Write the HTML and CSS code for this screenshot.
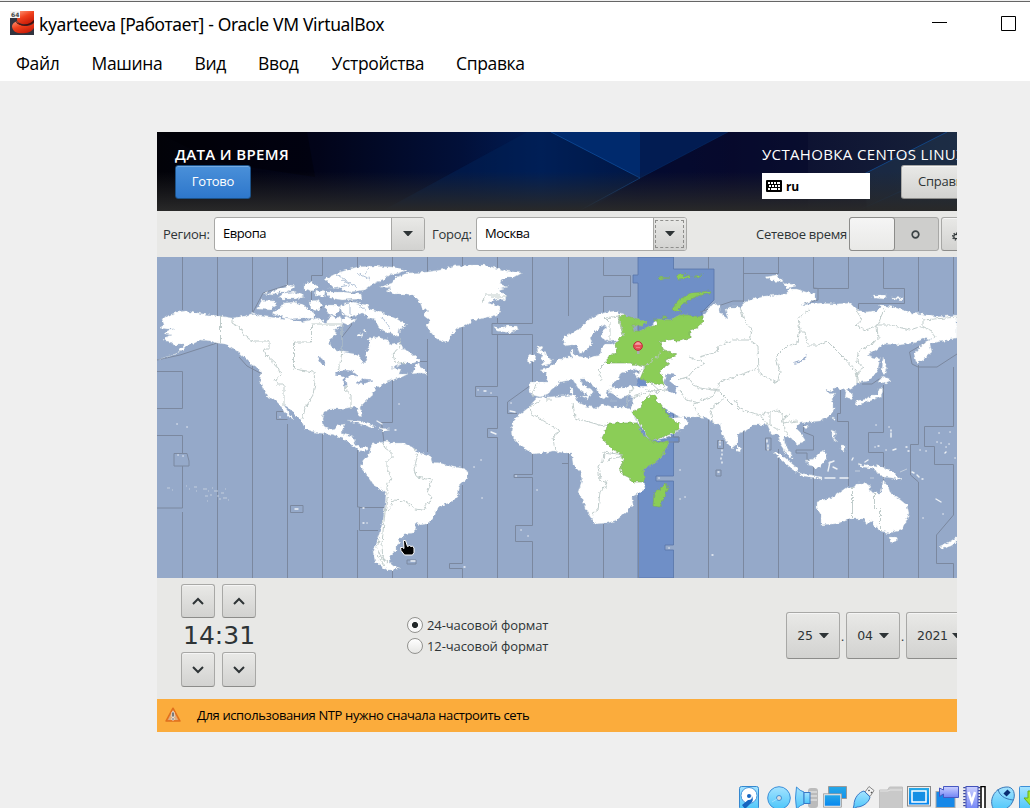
FILE: index.html
```html
<!DOCTYPE html>
<html lang="ru">
<head>
<meta charset="utf-8">
<title>kyarteeva [Работает] - Oracle VM VirtualBox</title>
<link rel="stylesheet" href="styles.css">
</head>
<body>
<div class="window">
  <div class="titlebar">
    <svg class="app-icon" viewBox="0 0 24 24">
      <defs><linearGradient id="red" x1="0" y1="0" x2="0.6" y2="1"><stop offset="0" stop-color="#ff9a7a"/><stop offset=".5" stop-color="#f0401c"/><stop offset="1" stop-color="#c91c08"/></linearGradient></defs>
      <rect width="24" height="24" fill="#32343f"/>
      <path d="M8 0h16v9c-3 4-7 5-12 4-3-1-5-2-5-4z" fill="url(#red)"/>
      <path d="M2 15c1-4 4-4 5-5 1 5 12 7 17 2v5c-3 5-10 6-16 5-4-1-6-4-6-7z" fill="url(#red)"/>
      <path d="M6 10c3 5 13 5 18-1v2c-5 5-15 5-18 0z" fill="#4e0c06"/>
      <rect width="10" height="7" fill="#f5f5f5"/>
      <text x="1" y="6" class="badge">64</text>
    </svg>
    <span class="title">kyarteeva [Работает] - Oracle VM VirtualBox</span>
    <svg class="win-buttons" viewBox="0 0 98 24"><path d="M0 10.500h15M69.500 4.500h14v14h-14z" fill="none" stroke="#000"/></svg>
  </div>
  <div class="menubar">
    <span class="m1">Файл</span><span class="m2">Машина</span><span class="m3">Вид</span><span class="m4">Ввод</span><span class="m5">Устройства</span><span class="m6">Справка</span>
  </div>
  <div class="workspace">
    <div class="screen">
      <div class="header">
        <svg class="header-art" viewBox="0 0 800 79" preserveAspectRatio="none">
          <defs>
            <linearGradient id="night"><stop offset="0" stop-color="#020208"/><stop offset=".2" stop-color="#020419"/><stop offset=".38" stop-color="#021039"/><stop offset=".48" stop-color="#001c55"/><stop offset=".6" stop-color="#020d35"/><stop offset=".72" stop-color="#090b2e"/><stop offset="1" stop-color="#17223a"/></linearGradient>
            <linearGradient id="fade" x2="0" y2="1"><stop offset=".5" stop-color="#272727" stop-opacity="0"/><stop offset="1" stop-color="#292929"/></linearGradient>
          </defs>
          <rect width="800" height="79" fill="url(#night)"/>
          <path d="M0 0h150l8 45L60 30z" fill="#000006" opacity=".4"/>
          <path d="M225 79L370 0h30l82 46-60 33z" fill="#002158" opacity=".5"/>
          <path d="M394 0h89v46z" fill="#002a6d"/>
          <path d="M483 0h88l-88 46z" fill="#021c52"/>
          <path d="M571 0h80v79H430l53-33z" fill="#05092c" opacity=".55"/>
          <path d="M707 42L790 0h10v79h-90z" fill="#213850" opacity=".5"/>
          <path d="M394 0l89 46-61 33M707 42L790 0" fill="none" stroke="#1156a8" opacity=".65"/>
          <path d="M700 79l100-45M571 0l-88 46" fill="none" stroke="#1156a8" opacity=".25"/>
          <rect width="800" height="79" fill="url(#fade)"/>
        </svg>
        <div class="head-left"><div class="head-title">ДАТА И ВРЕМЯ</div><div class="btn-blue">Готово</div></div>
        <div class="head-right">
          <div class="head-sub">УСТАНОВКА CENTOS LINUX 7</div>
          <div class="head-row">
            <div class="layout"><svg width="16" height="12" viewBox="0 0 16 12"><rect width="16" height="12" rx="1"/><path d="M2 3h2M5 3h2M8 3h2M11 3h3M3 6h2M6 6h2M9 6h2M12 6h2M2 9h2M5 9h6M12 9h2" stroke="#fff" stroke-width="2"/></svg><b>ru</b></div>
            <div class="btn help">Справка!</div>
          </div>
        </div>
      </div>
      <div class="toolbar">
        <span class="lbl-region">Регион:</span>
        <div class="combo"><span class="c1">Европа</span><i><svg width="10" height="6"><path d="M0 0h10L5.500 5h-1z" fill="#2e3436"/></svg></i></div>
        <span class="lbl-city">Город:</span>
        <div class="combo focused"><span class="c2">Москва</span><i><svg width="10" height="6"><path d="M0 0h10L5.500 5h-1z" fill="#2e3436"/></svg></i></div>
        <span class="lbl-net">Сетевое время</span>
        <div class="switch"><div class="knob"></div><svg width="9" height="9"><circle cx="4.500" cy="4.500" r="3.300" fill="none" stroke="#3c4446" stroke-width="1.700"/></svg></div>
        <div class="btn gear"><svg width="16" height="20" viewBox="0 0 16 20"><g fill="none" stroke="#2e3436"><circle cx="5" cy="12.500" r="2.200" stroke-width="1.200"/><circle cx="5" cy="12.500" r="3.400" stroke-width="1.300" stroke-dasharray="1.300 1.300"/><circle cx="9" cy="6" r="2" stroke-width="2"/></g></svg></div>
      </div>
      <svg class="map" viewBox="157 257 800 321">
        <defs><filter id="coast" x="157" y="257" width="800" height="321" filterUnits="userSpaceOnUse" color-interpolation-filters="sRGB"><feTurbulence type="fractalNoise" baseFrequency=".28" numOctaves="2" seed="4"/><feDisplacementMap in="SourceGraphic" scale="4.500" xChannelSelector="R" yChannelSelector="G"/></filter></defs>
        <rect x="157" y="257" width="800" height="321" fill="#95a9c9"/>
        <path d="M638 257H673.500V269H714V300L702 312V330H673.500V437H679V442H673.500V476H656V481H673.500V545H665V550H673.500V578H638V283H633V275H638z" fill="#6f8fc7" stroke="#5875a8" stroke-width=".8"/>
        <g class="zones">
          <path d="M182.500 257V310M157 371.500H182.500V408.500H157M157 435.500H182.500V453M174 453.500H187L189 461V466H174zM182.500 466V508H157M182.500 512V578M217.500 257V316M217.500 343V578M252.500 257V313L263 293L287.500 285V257M252.500 366V578M287.500 419.500H276.500V411.500H284M287.500 424V578M322.500 257V275.500H311.500V303L322 308M322.500 434V578M351.500 269V325L342 337M357.500 257V268M357.500 450V507H359.500V530.500H378M359.500 530V507.500H384M357.500 530V578M392.500 257V270M392.500 379V422.500H381.500L384 442M392.500 568V578M427.500 257V272M427.500 339V361.500H420M427.500 339V452M427.500 523V578M462.500 257V266M462.500 327V470M462.500 485V563.500H449.500V568.500H462.500V578M497.500 257V268M497.500 318V323M532.500 257V323.500H492V334.500H532.500V384L507.500 402V413.500H517M497.500 334V386.500H475.500V396.500H497.500V428.500H487.500V437.500H497.500V578M532.500 454V474.500H514V477.500H532.500V525.500H515.500V541.500H532.500V578M568.500 257V316M568.500 452V463.500H562M568.500 463V578M603.500 257V275.500H630.500V296.500H603.500V312M603.500 524V578M638.500 325V378M638.500 500V578M708.500 257V269M708.500 420V578M743.500 257V302M743.500 431V578M778.500 257V273.500H743.500M778.500 449V578M813.500 257V288L818 288.500V300L797 305M813.500 288.500H848.500V257M803.500 425V432L813.500 436V450H796V453H807V460H813.500V578M840.500 389V413.500H837.500V421.500H848.500V486M848.500 519V578M883.500 257V288.500H904.500V303.500H858.500V309M918.500 257V311M918.500 365V444.500H910.500V475L918.500 482V578M953.500 257V314M953.500 367V426.500H924.500V446.500H934.500V464.500H953.500V515L936.500 535V563.500H953.500V578M883.500 385V432.500H868.500V452.500H883.500V486M883.500 533V578M934 338L909.500 352L912 364L918 367H937L957 354M862 384H872L882 377M717.500 440.500H723.500V448.500H717.500zM765.500 438H771V450H765.500zM716 470H721V476H716zM290.500 505.500H303V512.500H290.500zM407 560H416V564H407zM648 437H679V442H660"/>
          <path d="M157 360L180 355L217 343M239 357L247 366L262 374M700 312L733 301H743"/>
        </g>
        <g filter="url(#coast)">
        <g class="land">
          <path d="M159 328L164 325L162 319L167 316L177 312L185 311L204 314L220 316L232 318L244 316L254 313L259 316L270 317L290 319L300 322L310 320L318 318L326 323L330 315L336 319L340 316L343 324L334 330L337 334L329 340L331 346L334 349L344 352L355 354L360 357L363 364L367 360L365 354L370 347L368 339L377 337L388 340L391 345L395 344L400 342L403 349L410 352L414 356L420 360L414 363L404 363L392 368L401 369L399 374L408 374L402 377L395 379L387 382L381 386L377 387L372 392L373 395L367 400L362 405L360 407L363 415L361 417L358 412L356 407L347 408L340 409L330 409L324 412L322 419L324 426L330 430L335 429L338 425L345 424L343 430L341 433L353 437L356 445L360 448L368 447V450L360 451L350 444L343 438L330 434L318 433L305 429L302 422L294 414L289 408L284 405L289 413L294 420L290 418L285 412L280 405L275 400L268 397L264 390L260 380L261 372L258 368L252 365L246 359L238 352L231 347L224 344L217 343L210 341L200 340L195 343L187 345L180 352L170 356L159 359L177 354L184 345H174L170 342L164 340L166 337L172 335L164 334L167 331L174 329L166 329z"/>
          <path d="M257 309L262 300L274 301L277 305L270 310zM272 313L280 308L284 303L294 302L304 305L309 310L314 313V319L302 318L290 319L276 315zM262 294L272 292L277 289L290 285L295 286L288 292L280 292L274 295zM279 297L284 293L294 292L304 296L296 299L284 299zM304 284L311 282L319 287L312 291L304 289zM316 290L325 292L324 297L315 296zM310 301L318 300L322 305L317 311L311 309zM325 279L337 273L350 269L357 267L373 266L392 267L407 270L400 273L390 275L386 278L373 284L365 290L350 292L342 289L334 288L330 284zM326 292L344 292L361 294L362 299L342 300L330 298zM340 307L345 303L353 302L367 305L370 309L380 312L390 316L397 319L407 325L400 329L398 337L391 333L383 332L378 327L377 321L368 318L363 313L350 317L342 314zM325 305H337L341 309L334 316L327 313zM345 316L356 320L348 325L341 322zM357 335L363 333L360 337zM363 330L366 329V333zM412 374L416 366L419 362L420 367L425 370L427 374L420 373z"/>
          <path d="M380 287L392 283L396 277L408 273L427 272L440 270L454 266L467 265L484 265L500 269L507 271L522 273L515 277L507 277L501 281L500 284L508 287L498 290L507 296L505 300L497 299L488 303L500 306L500 310L497 315L485 318L473 320L465 326L457 328L452 334L450 339L447 342L437 339L432 334L428 329L427 325L430 320L423 314L428 311L422 308L420 302L415 296L407 294L393 294L386 290L391 288z"/>
          <path d="M370 450L372 444L383 442L386 441L393 443H403L412 447L420 453L430 455L432 462L440 463L453 467L462 468L468 472L468 478L460 485L458 495L453 502L445 504L437 508L435 515L431 520L427 524L420 525L415 523L417 529L413 533L404 534V538H398L401 542L396 546L396 551L393 553L391 557L389 561L392 565L400 568L394 570L387 570L381 566L375 561L373 553L376 544L378 537L383 520L385 505L386 493L382 490L373 485L370 480L365 473L361 468L363 460L368 457z"/>
          <path d="M563 337L573 332L580 329L587 321L593 317L600 314L607 312L615 311L623 314L629 317L638 319L647 322L643 326L632 325L634 331L640 331L648 327L653 325L656 319L670 320L680 315L687 315L693 317L703 317L708 310L711 305L719 304L721 314L728 319L725 309L731 307L740 307L745 302L753 299L765 296L787 294L790 289L797 289L806 292L815 294V300L800 305L820 303L836 304L850 303L857 310L866 312L872 311L877 311L880 306L887 306L900 309L912 313L923 314L935 317L957 315V338L951 339L947 341L937 342L930 344L932 352L925 358L917 364L914 354L922 345L933 338L929 340L923 338L913 343L900 345L883 344L876 350L867 355L873 357L880 359L878 369L873 377L868 381L857 383L853 387L847 390L853 395L852 399L845 397L846 392L843 390L835 387L833 391L827 390L830 395L836 393L832 399L834 404V409L832 413L828 417L820 421L810 422L802 423L797 425V429L803 435L805 441L797 445L795 441L788 437L784 437L785 444L792 456L786 453L780 444L778 434L772 435L767 424L760 425L753 425L748 430L738 434L737 444L732 448L728 444L725 439L721 430L720 424L713 424L708 418L700 417L690 417H680L673 413L668 411L663 408L666 414L672 418L682 417L689 422L684 428L675 433L665 438L652 441L647 437L638 423L630 410L632 405L633 397L627 395L620 398L615 395L609 392L611 387L621 388L631 386L643 386L645 381L638 377L634 374L640 372L635 369L627 371L620 374L618 380L611 385V390L606 392L609 397L603 399L599 394L597 388L590 384L585 379H580L583 385L590 389L594 394H591L588 398L585 393L578 388L573 380L566 381L560 382L556 386L551 390L548 395L540 397L532 395L529 391L530 382L547 382L548 377L545 373L540 370L546 369L553 365L558 360L565 357L572 357L570 352L574 349V355L587 358L600 355L602 347L605 344H612L620 340L608 342L602 338V332L608 327L602 325L596 331L590 337L592 343L588 349L580 354L576 345L571 345L565 346z"/>
          <path d="M528 408L533 402L537 398L547 397L560 396L575 395L578 402L586 406L597 408L603 404L613 407L627 407L632 412L643 435L653 442H669L663 455L654 463L643 470L645 488L639 493L632 497L633 505L627 511L617 520L608 523L595 524L591 517L585 508L583 500L578 492L582 480L580 472L573 465L572 457L572 453L565 453L553 451L543 453L533 454L522 447L512 437L511 430L513 422L519 415z"/>
          <path d="M537 347L543 346L541 350L546 353L548 357L553 360L551 364L540 366L544 362L541 359L543 355L538 353zM527 358L531 354L536 355L535 361L528 363zM493 326L500 328L507 326L517 326L518 329L510 333L498 331zM579 396H588L587 399zM570 388H573V394H570zM610 401H617M628 401L634 399"/>
          <path d="M855 401L867 399L872 395L877 395L880 387L883 390L881 397L870 401L857 405zM878 382L883 376L892 380L883 384zM883 357L887 367L884 375L882 370zM737 446L741 449L740 452L737 451zM817 502L825 499L833 497L840 492L847 487L853 488L857 483H862L870 485L869 490L877 493L881 493L883 481L888 486L890 492L898 498L907 505L909 513L906 522L902 530L890 533L880 531L873 525L872 521L867 524L863 519L850 519L840 523L833 524L821 525V515L817 508zM889 537H897L896 541L893 543L890 541zM957 537V542L951 546L942 549L940 546L949 542zM773 452L782 455L789 461L797 468L798 473L790 468L781 460zM798 473L806 474L822 477V479L803 476zM806 460L813 459L820 452L825 450L827 457L820 468L808 466zM858 463L866 466L870 465L880 466L890 470L896 475L902 480L892 478L883 477L878 472L870 468L861 467zM792 459L786 454L784 449L792 454zM831 430L836 432L834 438L838 442L833 439zM841 445H845V451L840 450zM765 277L777 275L783 282L772 281zM783 284L790 283L797 286L787 288zM872 295L887 295L884 299L874 298zM892 297L903 298L902 300L892 299zM804 426L809 425L807 429zM832 417L835 418L833 421zM347 420L360 421L375 426L372 428L360 424zM379 428L390 429L383 431z"/>
        </g>
        <g class="water">
          <path d="M318 357L324 360L325 366L321 363zM335 374L342 370L352 371L358 376L351 375L345 378L346 385L344 386V377zM356 383L364 379L373 380L363 384zM667 374L675 375L669 381L677 387L676 394L668 391L665 382z"/>
          <path d="M793.500 363.500L799 361.500L804 358L806.500 354L805.500 358L800 362.500z"/>
          <path d="M637 378L646 381L647 386H638z" fill="#6f8fc7"/><path d="M663 408L668 411L672 418L667 416z" fill="#6f8fc7"/>
        </g>
        <g class="green">
          <path d="M618 316L622 315L638 319L647 322L643 326L632 325L634 331L640 331L648 327L658 325L656 319L670 320L680 315L687 315L703 317L704 322L697 328L690 330V338L680 341H675L674 339L660 342L662 349L676 354L674 357L665 360L670 364L660 370L662 378L664 385L655 384L640 379L645 367L630 363L607 363L607 357L617 352L615 344L623 335L620 324z"/>
          <path d="M652 394L656 396V400L660 404L663 408L672 420L680 423L679 430L673 433L652 441L647 436L640 423L632 412L640 408L642 402z"/>
          <path d="M608 423H637L643 435L653 442H669L663 455L654 463L643 470L645 482H632L630 478L622 474L620 466L624 461L620 454L612 450L602 438L606 430z"/>
          <path d="M666 483L668 488L660 507L653 506L654 492L660 489zM672 309L680 299L693 293L710 291L711 293L697 296L683 304L678 309L682 312L674 311zM658 277L670 278L660 279zM676 276L685 273L683 277L691 275L690 278L678 279zM693 276L703 275L698 278zM654 319h3v2h-3zM662 317h5v1h-5z"/>
        </g>
        <path class="fjords" d="M336 274L350 283M342 280L357 287M328 289L350 285M357 273L370 279M370 268L363 274M350 304V315M359 305L366 310M382 317L390 328"/>
        </g>
        <path class="islands" d="M187 427h.1M177 424h.1M178 455h.1M183 456h.1M280 417h.1M377 421l5 3M395 430h1M399 404h.1M478 390h.1M484 391h2M491 393h.1M511 403h.1M510 411l5 1M491 432l5 2M474 467h.1M481 460h.1M482 498h.1M516 476h.1M537 490h.1M521 530h.1M528 536h.1M659 478h.1M680 470h.1M680 499h.1M685 497h.1M669 548h.1M712 555h1M720 441v1M720 444v1M722 450v1M722 454v1M721 458v1M722 462v1M718 472h1M767 440v2M768 445v2M768 449v1M830 462l-2 9M834 461l-5 2M837 469l-4-2M825 478h10M840 478h8M852 460l1-2M865 462l3-2M875 447h.1M878 446h1M886 450h.1M893 450l3-1M906 447h1M908 451h1M920 450h.1M926 451h.1M889 427h.1M891 430v1M891 433v4M876 425h.1M937 442h.1M941 443h.1M946 447h.1M949 444h.1M945 453l1-1M950 432h.1M939 433h.1M955 458h.1M912 472l2 1M917 475l2 2M922 479h1M936 499l5 3M923 518h.1M943 514h.1M363 508h1M363 523h1M367 523h.1M411 561h4M464 567h1M295 509h3"/>
        <path class="specks" d="M167 488h3M172 490h1M186 486h1M189 489h1M194 487h3M196 491h1M203 489h4M208 491h1M205 496h3M210 495h2M212 488h1M214 491h4M217 496h2M221 493h3M219 499h2M223 498h4M207 501h1M225 489h1M228 500h1M870 478h4M855 471h5M900 472l7-3M870 485h1"/>
        <g class="borders" filter="url(#coast)"><path d="M220.500 316V343M232 318V323L239 327L244 335L252 341H269V349H264L266 355L276 364L281 375L275 380L277 384H284V405M342 324H311.500V342H293.500V369L314 372L315 382L313 395L305 408L302 420M342 325V350L340 365L338 370M347 385L345 390L351 395V408M400 339L401 345L393 354L395 362L405 364M383 442L385 448L392 453V458L387 461V469L392 479L388 484L386 493M388 492L384 520L382 545L383 560M414 448L417 457L414 470L417 477L432 480L427 493L432 497L423 510L415 509L405 501L393 500L388 512M541 400L530 407L531 413L560 431L553 437L555 451M573 403L575 418L607 427M532 396L536 384M602 380L598 370L606 362M624 336L618 316L606 318M610 340V323L603 316M552 399L547 399V403M623 455L604 452L603 462L598 466L600 480L607 483L600 492L598 510L592 514M627 406V397L634 387M633 397L650 391L668 390M680 390L686 400L700 403M677 380L687 377L693 385L700 388L719 391L725 397L710 410L713 424M700 357L717 352L718 346L733 340L750 340L758 346L759 373L777 383L780 372L776 357L787 346L797 343L800 330L798 318L810 310M740 307L744 320L752 330L750 340M713 396L720 382L740 375L757 368M808 345H818L827 341L843 357L855 370L860 383M798 332L805 332L807 344M735 400L740 409L760 415L777 410L783 414V423L797 421M725 397L738 410M760 415L767 424M857 310L862 320L855 326L866 330L877 325H890L910 330L922 326L932 331L935 338M885 308L877 325L878 340L867 346L858 352L857 362L864 368L857 373V383M958 317L923 320V325M482 305L485 295H500M492 297H507M852.500 488V518M874.500 493V508.500H880.500V531M608 460L622 456M700 417L693 405L702 400L713 396M770 412V426L780 430M788 436L781 420L790 415M606 480V490M690 357L705 363L693 371L686 379M646 389L658 393L664 386M652 384L660 391M708 388L720 390M640 371L662 352M376 554L384 566M380 537L377 548L380 556L388 562"/></g>
        <path d="M637 350h2.500v4h-2.500z" fill="#a9aeb0"/><circle cx="638" cy="346" r="4.400" fill="#e65058" stroke="#b9323a"/><path d="M635 344.500q3-4.500 6 0zM636 347.500h4" fill="#f6a0a4" stroke="#f6a0a4" stroke-width=".6"/>
        <path d="M403.500 540.500h2l2 6 2-1 1.500 1 1.500-.5 1.500 2v4.500l-1.500 2.500h-8l-3.500-4.500-.5-3h2l1.500 1z" fill="#000" stroke="#fff"/>
      </svg>
      <div class="bottom">
        <div class="clock">
          <div class="btn sq"><svg width="14" height="9"><path d="M2 7l5-5 5 5" /></svg></div><div class="btn sq"><svg width="14" height="9"><path d="M2 7l5-5 5 5" /></svg></div>
          <div class="time"><span>14</span><span>:</span><span>31</span></div>
          <div class="btn sq low"><svg width="14" height="9"><path d="M2 2l5 5 5-5" /></svg></div><div class="btn sq low"><svg width="14" height="9"><path d="M2 2l5 5 5-5" /></svg></div>
        </div>
        <div class="formats"><div class="fmt"><i class="radio on"></i><span>24-часовой формат</span></div><div class="fmt"><i class="radio"></i><span>12-часовой формат</span></div></div>
        <div class="date">
          <div class="btn day">25<svg width="10" height="6"><path d="M0 0h10L5.500 5h-1z" fill="#2e3436"/></svg></div><span>.</span>
          <div class="btn day">04<svg width="10" height="6"><path d="M0 0h10L5.500 5h-1z" fill="#2e3436"/></svg></div><span>.</span>
          <div class="btn year">2021<svg width="10" height="6"><path d="M0 0h10L5.500 5h-1z" fill="#2e3436"/></svg></div>
        </div>
      </div>
      <div class="warning"><svg width="16" height="16" viewBox="0 0 16 16"><path d="M8 1.200L15 14H1z" fill="#f08a3c" stroke="#e0701c" stroke-linejoin="round" stroke-width="1.500"/><path d="M8 3L13 13H3z" fill="#dcae80"/><path d="M7 5h2v5H7zM7 11h2v2H7z" fill="#333" stroke="#fff" stroke-width=".7"/></svg><span>Для использования NTP нужно сначала настроить сеть</span></div>
    </div>
    <div class="status">
      <svg viewBox="0 0 24 24"><defs><linearGradient id="sky" x1="0" y1="0" x2="0" y2="1"><stop offset="0" stop-color="#a5e3ff"/><stop offset="1" stop-color="#4cc6fa"/></linearGradient><linearGradient id="blue" x1="0" y1="0" x2="0" y2="1"><stop offset="0" stop-color="#27a8e6"/><stop offset="1" stop-color="#0686f0"/></linearGradient><linearGradient id="violet" x1="0" y1="0" x2="0" y2="1"><stop offset="0" stop-color="#cbd0ff"/><stop offset="1" stop-color="#7184f5"/></linearGradient></defs>
        <rect x=".5" y=".5" width="19" height="23" rx="2" fill="url(#sky)" stroke="#3488d0"/><circle cx="10" cy="9.500" r="8" fill="#fff" stroke="#4795db"/><path d="M3 19l6-5c4 1 6-5 1-6 3 0 5 5 3 8l-7 7z" fill="#1665c0"/><circle cx="10" cy="10" r="2" fill="#1665c0"/></svg>
      <svg viewBox="0 0 24 24"><circle cx="12" cy="12" r="11.300" fill="url(#sky)" stroke="#3d8fd8"/><circle cx="12" cy="12" r="2.500" fill="#ddd" stroke="#3d8fd8"/><path d="M5 16l5-3" stroke="#9be0ff"/></svg>
      <svg viewBox="0 0 24 24"><rect x="13" y="2" width="10" height="20" rx="3" fill="#bbb"/><path d="M14 6h8M14 10h8M14 14h8" stroke="#eee"/><path d="M1.500 1Q5 5 9 6v12q-4 1-7.500 5-2-11 0-22z" fill="url(#sky)" stroke="#3d8fd8"/><rect x="9" y="6.500" width="6" height="11" fill="url(#sky)" stroke="#3978c6"/></svg>
      <svg viewBox="0 0 24 24"><path d="M5.500.5h18v12H18v7H6z" fill="url(#blue)" stroke="#999"/><path d="M1 8.500h17v12H1z" fill="url(#blue)" stroke="#eee" stroke-width="1.500"/><path d="M.4 7.800h18v13.400H.4z" fill="none" stroke="#888" stroke-width=".7"/><path d="M5 22.500h10" stroke="#888"/></svg>
      <svg viewBox="0 0 24 24"><path d="M14 6l4-5.500 5 4-4 6z" fill="#f3f3f3" stroke="#888"/><path d="M17.500 4l1 1M20 6l1 1" stroke="#555" stroke-width="1.500"/><path d="M13 5l6 6c-1 6-8 10-13 10l-4 2 1-4c0-7 5-13 10-14z" fill="url(#sky)" stroke="#3978c6"/></svg>
      <svg viewBox="0 0 24 24"><path d="M.5 4h8l2-3h13v23H.5z" fill="#c9c9c9" stroke="#c0c0c0"/><path d="M1 5h8l2-1h12" fill="none" stroke="#e4e4e4"/></svg>
      <svg viewBox="0 0 24 24"><rect x=".5" y=".5" width="23" height="19.500" fill="#eee" stroke="#888"/><rect x="2" y="2" width="20" height="16.500" fill="url(#blue)"/><rect x="5" y="5" width="14" height="11" fill="#168fe4" stroke="#fff" stroke-width="1.500"/><path d="M6 22.500h12" stroke="#aaa"/></svg>
      <svg viewBox="0 0 24 24"><rect x="1" y="5.500" width="19" height="16" fill="#1688e8" stroke="#aaa"/><path d="M8.500.5h15v11h-15V8l-4 2.500V2l4 2z" fill="url(#violet)" stroke="#4658c2"/></svg>
      <svg viewBox="0 0 24 24"><path d="M1.500 1v22M16 1v22" stroke="#39469c" stroke-width="2.500" stroke-dasharray="1.200 1.800"/><rect x="3" y=".5" width="12" height="23" fill="url(#violet)" stroke="#4352ba"/><path d="M5.500 6l3.300 10L12 6" fill="none" stroke="#fff" stroke-width="2.500"/><path d="M18 .5h4v24h-4z" fill="#fff" stroke="#000" stroke-width="1.500"/></svg>
      <svg viewBox="0 0 24 24"><path d="M2 22C-2 14 3 2 15 1c8-1 10 8 7 14-4 10-17 12-20 7z" fill="url(#sky)" stroke="#3978b8"/><path d="M7 3c1 6 6 10 15 11" fill="none" stroke="#3978b8"/><path d="M14 9l4-4" stroke="#092d72" stroke-width="4.500"/></svg>
      <svg viewBox="0 0 24 24"><rect x=".5" y=".5" width="23" height="23" rx="1" fill="url(#sky)" stroke="#3d8fd8"/><path d="M9 5h7v7h5l-8 9-8-9h4z" fill="#a3e82d" stroke="#6aae1a"/></svg>
    </div>
  </div>
</div>
</body>
</html>
```
FILE: styles.css
```css
* { box-sizing: border-box; }
body { margin: 0; background: #efefef; font-family: "Open Sans", "Noto Sans", sans-serif; color: #000; }
.window { width: 1030px; height: 808px; overflow: hidden; display: flex; flex-direction: column; background: #efefef; }
.titlebar { height: 48px; flex: none; background: #fff; border-top: 1px solid #666; margin-top: 1px; display: flex; align-items: center; padding: 0 0 4px 10px; }
.app-icon { width: 24px; height: 24px; flex: none; margin-right: 5px; position: relative; top: -1px; }
.badge { font: bold 6px "DejaVu Sans", sans-serif; fill: #444; }
.title { font: 17.500px "Noto Sans", sans-serif; white-space: nowrap; flex: 1; letter-spacing: -.34px; }
.win-buttons { width: 98px; height: 24px; flex: none; }
.menubar { height: 32px; flex: none; background: #fff; display: flex; align-items: center; padding: 0 0 4px 16px; font-size: 17.500px; letter-spacing: -.35px; white-space: nowrap; }
.m1 { width: 75.500px; } .m2 { width: 103px; } .m3 { width: 63.500px; } .m4 { width: 73.500px; } .m5 { width: 124.500px; }
.workspace { flex: 1; padding-top: 51px; }
.screen { width: 800px; height: 600px; margin-left: 157px; background: #e8e8e6; overflow: hidden; color: #2e3436; font-size: 13px; letter-spacing: -.25px; white-space: nowrap; }
.header { height: 79px; display: grid; grid-template-columns: 587px 213px; padding-left: 18px; color: #fff; overflow: hidden; position: relative; }
.header-art { position: absolute; left: 0; top: 0; width: 800px; height: 79px; }
.head-left, .head-right { position: relative; }
.head-title { font-size: 15px; letter-spacing: .35px; font-weight: 600; line-height: 20px; margin-top: 12px; height: 21px; }
.head-sub { font-size: 15px; letter-spacing: .35px; line-height: 20px; margin-top: 12px; height: 21px; }
.btn { border: 1px solid #a8a8a6; border-bottom-color: #8c8c8a; border-radius: 3px; background: linear-gradient(#e9e9e7, #d2d2d0); box-shadow: inset 0 1px #f5f5f5; color: #2e3436; display: flex; align-items: center; justify-content: center; flex: none; }
.btn-blue { width: 76px; height: 34px; border: 1px solid #1c5187; border-radius: 3px; background: linear-gradient(#4a90d9, #2e77cb); box-shadow: inset 0 1px #76abe2; display: flex; align-items: center; justify-content: center; padding-bottom: 2px; }
.head-row { display: flex; margin-top: -1px; }
.layout { width: 108px; height: 26px; flex: none; margin: 9px 31px 0 0; background: #fff; color: #000; display: flex; align-items: center; padding-left: 4px; gap: 4px; font-size: 12px; }
.help { width: 84px; height: 34px; margin-top: 1px; padding: 0 0 2px 16px; justify-content: flex-start; }
.toolbar { height: 46px; display: flex; align-items: center; padding-left: 6px; }
.toolbar > span { flex: none; padding-bottom: 1px; }
.lbl-region { width: 51px; } .lbl-city { width: 44px; margin-left: 7px; } .lbl-net { margin-left: 69px; width: 93px; }
.combo { width: 211px; height: 34px; flex: none; border: 1px solid #a8a8a6; border-radius: 3px; background: #fff; color: #000; display: flex; overflow: hidden; letter-spacing: -.45px; }
.combo span { flex: 1; padding-left: 8px; line-height: 30px; }
.combo i { width: 33px; border-left: 1px solid #a8a8a6; background: linear-gradient(#e9e9e7, #d2d2d0); display: flex; align-items: center; justify-content: center; }
.focused i { outline: 1px dashed #8e8e8c; outline-offset: -3px; }
.switch { width: 90px; height: 34px; border: 1px solid #a8a8a6; border-radius: 3px; background: #cececc; display: flex; align-items: center; gap: 16px; flex: none; }
.knob { width: 46px; height: 34px; margin: -1px 0 -1px -1px; border: 1px solid #8c8c8a; border-radius: 3px; background: linear-gradient(#f5f5f5, #e9e9e7); }
.gear { width: 35px; height: 34px; margin-left: 2px; }
.map { display: block; width: 800px; height: 321px; }
.zones { fill: none; stroke: #7b889f; stroke-width: 1; }
.land { fill: #fff; stroke: #c3cfd8; stroke-width: .4; }
.islands { fill: none; stroke: #eef2f6; stroke-width: 1.400; stroke-linecap: round; }
.specks { fill: none; stroke: #c3cedd; stroke-width: 1; }
.water { fill: #95a9c9; stroke: #95a9c9; stroke-width: .5; }
.green { fill: #8bcd57; stroke: #7ba764; stroke-width: .6; }
.borders { fill: none; stroke: #b9c6c5; stroke-width: .9; stroke-linejoin: round; }
.fjords { fill: none; stroke: #a6b9d0; stroke-width: .9; }
.bottom { height: 121px; display: flex; align-items: flex-start; }
.clock { width: 76px; margin: 6px 0 0 24px; display: grid; grid-template-columns: 34px 34px; column-gap: 7px; flex: none; }
.sq { height: 34px; } .sq path { fill: none; stroke: #2e3436; stroke-width: 2; }
.low { height: 35px; }
.time { grid-column: 1 / 3; height: 34px; display: flex; justify-content: space-between; align-items: center; font: 25px/34px "DejaVu Sans", sans-serif; letter-spacing: 0; width: 73px; padding: 1px 0 0 2px; }
.formats { margin: 36px 0 0 150px; width: 200px; flex: none; letter-spacing: -.1px; }
.fmt { height: 21px; display: flex; align-items: center; gap: 4px; }
.radio { width: 16px; height: 16px; border: 1px solid #92928f; border-radius: 50%; background: linear-gradient(#fff, #e6e6e4); }
.on { background: radial-gradient(circle, #222829 0 2.700px, #f8f8f8 3.400px); }
.date { display: flex; margin: 34px 0 0 179px; flex: none; }
.date span { width: 6px; height: 46px; line-height: 50px; font-size: 12px; padding-left: 1px; }
.day, .year { width: 54px; height: 47px; gap: 6px; font: 12.500px "DejaVu Sans", sans-serif; }
.year { width: 76px; justify-content: flex-start; padding-left: 10px; gap: 4px; }
.warning { height: 33px; background: #fbac3c; display: flex; align-items: center; padding: 0 0 1px 8px; color: #000; letter-spacing: -.38px; }
.warning span { margin-left: 16px; }
.status { display: flex; gap: 4px; margin: 54px 0 0 739px; height: 24px; }
.status svg { width: 24px; height: 24px; flex: none; }
```
